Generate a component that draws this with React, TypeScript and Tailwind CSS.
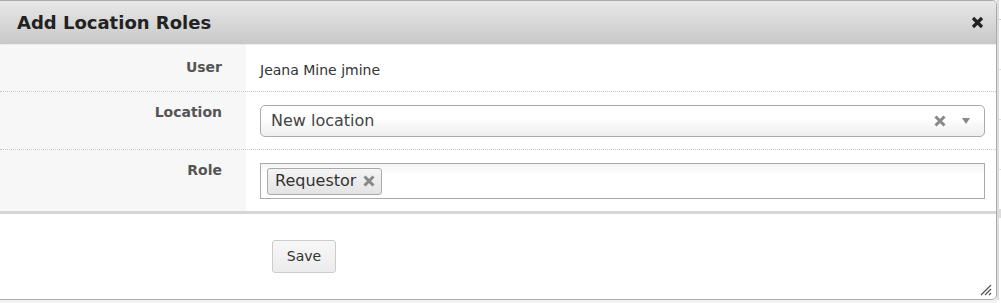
import React from 'react';

const font = "font-['DejaVu_Sans','Verdana',sans-serif]";

const FormRow: React.FC<{
  label: string;
  children: React.ReactNode;
  height: string;
  labelPad: string;
  valuePad: string;
  last?: boolean;
}> = ({ label, children, height, labelPad, valuePad, last }) => (
  <div
    className={`grid grid-cols-[246px_1fr] shrink-0 ${height} ${
      last ? 'border-b-[3px] border-solid border-[#d6d6d6]' : 'border-b border-dotted border-[#c4c4c4]'
    }`}
  >
    <div className={`bg-[#f7f7f7] text-right pr-[24px] text-[14px] leading-[21px] font-bold text-[#555] ${labelPad}`}>
      {label}
    </div>
    <div className={`bg-white pl-[14px] pr-[11px] ${valuePad}`}>{children}</div>
  </div>
);

const App: React.FC = () => {
  return (
    <div className={`w-[1001px] h-[303px] flex bg-[#f2f2f2] overflow-hidden ${font}`}>
      <div className="w-[997px] h-[300px] flex flex-col bg-white border-t border-r border-b border-[#aaa] rounded-tr-[5px] rounded-br-[5px] relative">
        {/* Header */}
        <div className="h-[44px] shrink-0 flex items-center justify-between pl-[17px] pr-[12px] bg-gradient-to-b from-[#e8e8e8] to-[#c8c8c8] border-b border-dotted border-[#eee] rounded-tr-[4px]">
          <h3 className="text-[18px] font-bold text-[#222]">Add Location Roles</h3>
          <svg width="13" height="13" viewBox="0 0 13 13">
            <path d="M2 2 L11 11 M11 2 L2 11" stroke="#222" strokeWidth="3.2" />
          </svg>
        </div>

        {/* Body */}
        <FormRow label="User" height="h-[47px]" labelPad="pt-[12px]" valuePad="pt-[13px]">
          <span className="text-[14px] leading-[21px] text-[#333]">Jeana Mine jmine</span>
        </FormRow>

        <FormRow label="Location" height="h-[58px]" labelPad="pt-[10px]" valuePad="pt-[13px]">
          <div className="h-[32px] flex items-center justify-between pl-[10px] pr-[14px] border border-[#aaa] rounded-[5px] bg-gradient-to-b from-white from-[40%] to-[#eee]">
            <span className="text-[16px] text-[#444]">New location</span>
            <div className="flex items-center gap-[16px]">
              <svg width="12" height="12" viewBox="0 0 12 12">
                <path d="M1.5 1.5 L10.5 10.5 M10.5 1.5 L1.5 10.5" stroke="#888" strokeWidth="3" />
              </svg>
              <svg width="8" height="6" viewBox="0 0 8 6">
                <path d="M0 0 H8 L4 6 Z" fill="#888" />
              </svg>
            </div>
          </div>
        </FormRow>

        <FormRow label="Role" height="h-[64px]" labelPad="pt-[10px]" valuePad="pt-[13px]" last>
          <div className="h-[36px] flex items-center pl-[6px] border border-[#aaa] bg-gradient-to-b from-[#f4f4f4] from-0% to-white to-[30%]">
            <div className="h-[27px] flex items-center gap-[7px] pl-[7px] pr-[6px] border border-[#aaa] rounded-[3px] bg-gradient-to-b from-[#f4f4f4] to-[#e4e4e4]">
              <span className="text-[16px] text-[#333]">Requestor</span>
              <svg width="12" height="12" viewBox="0 0 12 12">
                <path d="M1.5 1.5 L10.5 10.5 M10.5 1.5 L1.5 10.5" stroke="#888" strokeWidth="3" />
              </svg>
            </div>
          </div>
        </FormRow>

        {/* Footer */}
        <div className="flex-1 pl-[272px] pt-[26px]">
          <button className="w-[64px] h-[33px] text-[14px] text-[#333] border border-[#ccc] rounded-[3px] bg-gradient-to-b from-[#f7f7f7] to-[#ececec]">
            Save
          </button>
        </div>

        {/* resize grip */}
        <svg width="13" height="13" viewBox="0 0 13 13" className="absolute right-[4px] bottom-[3px]">
          <path d="M12 2 L2 12 M12 6 L6 12 M12 10 L10 12" stroke="#555" strokeWidth="1.2" />
        </svg>
      </div>

      {/* page behind the dialog */}
      <div className="flex-1 flex flex-col bg-white">
        <div className="h-[300px] border-l-2 border-[#ddd] flex flex-col">
          <div className="h-[20px] border-b border-[#ccc]" />
          <div className="h-[50px] border-b border-[#ddd]" />
          <div className="h-[50px] border-b border-[#ddd]" />
          <div className="h-[50px] border-b border-[#ddd]" />
          <div className="h-[40px] border-b border-[#ddd]" />
          <div className="h-[8px] bg-[#ddd]" />
        </div>
      </div>
    </div>
  );
};

export default App;
